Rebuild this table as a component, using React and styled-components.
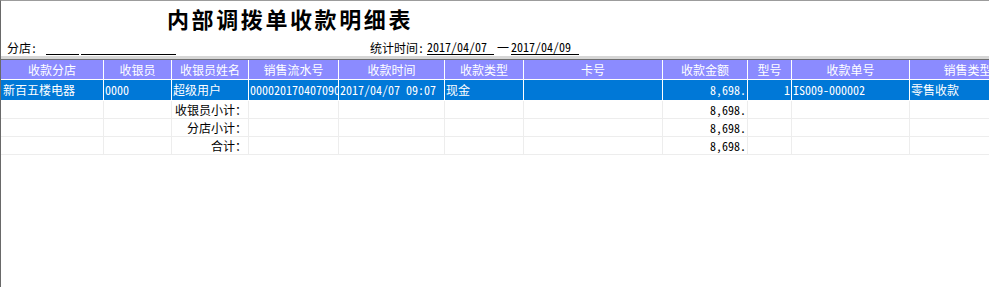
import styled, { createGlobalStyle } from 'styled-components';

const GlobalStyle = createGlobalStyle`
  html, body {
    margin: 0;
    padding: 0;
    background: #ffffff;
  }
  body {
    font-family: "Noto Sans Mono CJK SC", "Noto Sans CJK SC", sans-serif;
    font-size: 12px;
    color: #000;
  }
`;

const columns = [
  { w: 103, title: '收款分店' },
  { w: 68, title: '收银员' },
  { w: 77, title: '收银员姓名' },
  { w: 90, title: '销售流水号' },
  { w: 106, title: '收款时间' },
  { w: 79, title: '收款类型' },
  { w: 139, title: '卡号' },
  { w: 85, title: '收款金额' },
  { w: 44, title: '型号' },
  { w: 118, title: '收款单号' },
  { w: 116, title: '销售类型' },
];

// numbers right, text left; subtotal captions are right-aligned too
const numeric = [7, 8];

const rows = [
  {
    kind: 'selected',
    cells: ['新百五楼电器', '0000', '超级用户', '00002017040709070001', '2017/04/07 09:07', '现金', '', '8,698.', '1', 'IS009-000002', '零售收款'],
  },
  { kind: 'plain', total: true, cells: ['', '', '收银员小计：', '', '', '', '', '8,698.', '', '', ''] },
  { kind: 'plain', total: true, cells: ['', '', '分店小计：', '', '', '', '', '8,698.', '', '', ''] },
  { kind: 'plain', total: true, cells: ['', '', '合计：', '', '', '', '', '8,698.', '', '', ''] },
];

const palette = {
  head: { bg: '#8b8bff', fg: '#ffffff', line: '#ffffff' },
  selected: { bg: '#0078d7', fg: '#ffffff', line: '#ffffff' },
  plain: { bg: '#ffffff', fg: '#000000', line: '#ededed' },
};

const Page = styled.div`
  box-sizing: border-box;
  height: 100vh;
  border-top: 1px solid #9c9c9c;
  border-left: 1px solid #696969;
  overflow: hidden;
`;

const Head = styled.div`
  height: 55px;
  padding-top: 6px;
  box-sizing: border-box;
  display: flex;
  flex-direction: column;
`;

const Title = styled.h1`
  margin: 0;
  padding-left: 166px;
  font-family: "Noto Sans CJK SC", sans-serif;
  font-size: 22px;
  line-height: 22px;
  font-weight: 700;
  letter-spacing: 2.6px;
  color: #000;
`;

const InfoRow = styled.div`
  display: flex;
  align-items: flex-end;
  height: 15px;
  margin-top: 11px;
  padding-left: 6px;
`;

const Label = styled.span`
  flex: none;
  width: ${p => p.$w}px;
  margin-left: ${p => p.$ml || 0}px;
  line-height: 14px;
  white-space: nowrap;
`;

const Field = styled.span`
  flex: none;
  box-sizing: border-box;
  width: ${p => p.$w}px;
  margin-left: ${p => p.$ml || 0}px;
  height: 15px;
  line-height: 14px;
  border-bottom: 1px solid #000;
  white-space: nowrap;
`;

const Dash = styled.span`
  flex: none;
  width: 17px;
  padding-left: 3px;
  box-sizing: border-box;
  line-height: 14px;
`;

const Band = styled.div`
  height: 3px;
  background: #d6d6d6;
  border-bottom: 1px solid #6e6e6e;
`;

const Grid = styled.div`
  overflow: hidden;
`;

const Row = styled.div`
  display: grid;
  grid-template-columns: ${columns.map(c => `${c.w}px`).join(' ')};
  width: max-content;
  height: ${p => p.$h}px;
  box-sizing: border-box;
  background: ${p => palette[p.$kind].bg};
  color: ${p => palette[p.$kind].fg};
  border-bottom: 1px solid ${p => palette[p.$kind].line};
`;

const Cell = styled.div`
  box-sizing: border-box;
  display: flex;
  align-items: center;
  justify-content: ${p => (p.$align === 'right' ? 'flex-end' : p.$align === 'center' ? 'center' : 'flex-start')};
  padding: 0 1px 0 ${p => (p.$first ? 2 : 1)}px;
  border-right: 1px solid ${p => palette[p.$kind].line};
  overflow: hidden;
  white-space: nowrap;
  line-height: 14px;
  font-size: 12px;
`;

const alignFor = (row, ci) => {
  if (numeric.includes(ci)) return 'right';
  if (row.total && ci === 2) return 'right';
  return 'left';
};

export default function App() {
  return (
    <>
      <GlobalStyle />
      <Page>
        <Head>
          <Title>内部调拨单收款明细表</Title>
          <InfoRow>
            <Label $w={39}>分店:</Label>
            <Field $w={33} />
            <Field $w={95} $ml={2} />
            <Label $w={57} $ml={194}>统计时间:</Label>
            <Field $w={67}>2017/04/07</Field>
            <Dash>一</Dash>
            <Field $w={68}>2017/04/09</Field>
          </InfoRow>
        </Head>
        <Band />
        <Grid>
          <Row $kind="head" $h={20}>
            {columns.map((c, i) => (
              <Cell key={i} $kind="head" $align="center">{c.title}</Cell>
            ))}
          </Row>
          {rows.map((r, ri) => (
            <Row key={ri} $kind={r.kind} $h={ri === 0 ? 21 : 18}>
              {r.cells.map((txt, ci) => (
                <Cell key={ci} $kind={r.kind} $align={alignFor(r, ci)} $first={ci === 0}>{txt}</Cell>
              ))}
            </Row>
          ))}
        </Grid>
      </Page>
    </>
  );
}
